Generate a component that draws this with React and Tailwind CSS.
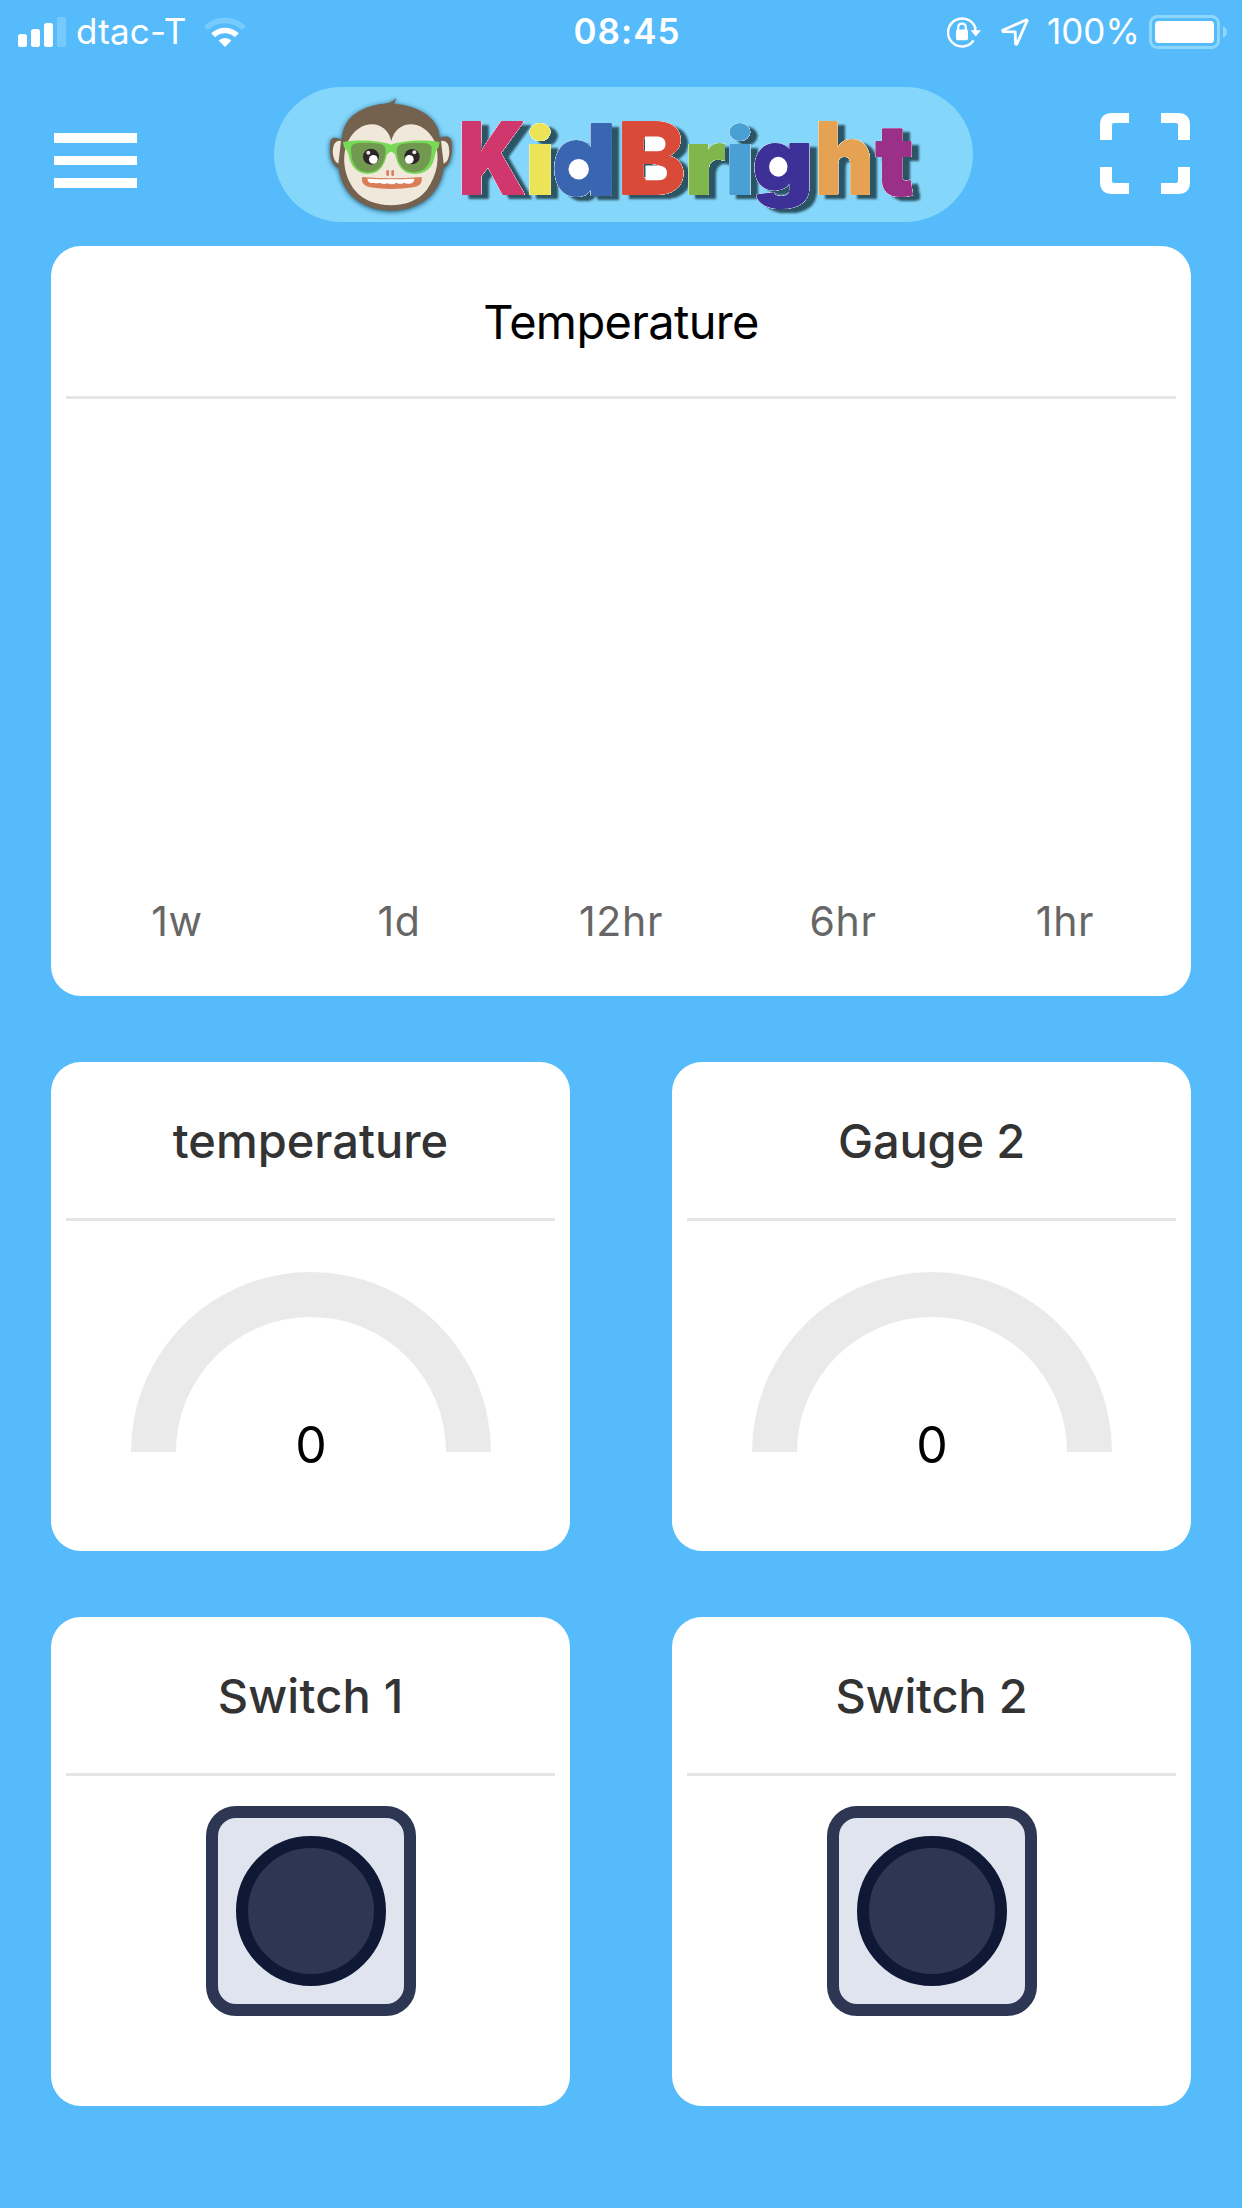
import React from "react";

const LETTERS = [
  { ch: "K", x: 458.8, y: 194, sx: 0.88, sy: 0.985, fill: "#d0376d" },
  { ch: "i", x: 525.8, y: 194, sx: 0.97, sy: 0.89, fill: "#ece357" },
  { ch: "d", x: 552.6, y: 194.6, sx: 0.98, sy: 0.975, fill: "#3a66b1" },
  { ch: "B", x: 618.4, y: 194, sx: 0.99, sy: 0.985, fill: "#d94a39" },
  { ch: "r", x: 685, y: 194, sx: 0.93, sy: 0.9, fill: "#80b64c" },
  { ch: "i", x: 725.4, y: 194, sx: 0.97, sy: 0.89, fill: "#4aa0d5" },
  { ch: "g", x: 752.8, y: 190, sx: 0.93, sy: 0.84, fill: "#3d3198" },
  { ch: "h", x: 815, y: 194, sx: 0.9, sy: 0.985, fill: "#e4a252" },
  { ch: "t", x: 875.6, y: 194.6, sx: 0.95, sy: 0.97, fill: "#9a3088" },
];

function Monkey() {
  return (
    <g transform="translate(270 80) scale(0.33333)">
      <g className="drop-shadow-[0_3px_8px_#16506e]">
        <path
          fill="#74614e"
          d="M216 180 C217 105 285 76 352 70 Q368 66 378 53 Q377 66 371 71 C440 76 508 110 509 174 Q540 162 545 184 C548 220 544 252 521 264 C512 340 450 392 364 392 C276 392 215 340 206 264 C182 254 177 220 181 184 Q186 164 216 180 Z"
        />
      </g>
      <path fill="#f1e8dc" d="M213 183 Q190 178 188 216 Q190 244 205 251 Z" />
      <path fill="#f1e8dc" d="M513 183 Q537 178 538 216 Q537 244 521 251 Z" />
      <path
        fill="#f1e8dc"
        d="M364 183 C350 120 270 112 234 184 C212 232 224 292 254 330 C300 390 424 392 470 330 C502 286 512 232 494 184 C458 112 378 120 364 183 Z"
      />
      <path
        fill="#77d956"
        d="M219 186 C280 176 335 184 363 194 C392 184 448 176 509 186 L506 201 Q498 210 495 226 C488 268 465 282 433 282 C400 282 384 262 376 226 Q364 204 350 226 C342 262 326 282 292 282 C258 280 242 258 236 226 Q232 210 222 202 Z"
      />
      <path fill="#719a50" d="M243 204 Q244 190 266 189 Q315 186 335 193 Q347 197 347 214 C344 256 325 277 293 277 C260 276 242 250 243 204 Z" />
      <path fill="#719a50" d="M485 204 Q484 190 462 189 Q413 186 393 193 Q380 197 380 214 C383 256 402 277 434 277 C467 276 486 250 485 204 Z" />
      <circle cx="303" cy="230" r="24" fill="#2d2528" />
      <circle cx="426" cy="230" r="23" fill="#2d2528" />
      <circle cx="310" cy="238" r="13" fill="#fff" />
      <circle cx="418" cy="238" r="13" fill="#fff" />
      <circle cx="295" cy="218" r="6" fill="#e8e4e4" />
      <circle cx="433" cy="217" r="6" fill="#e8e4e4" />
      <rect x="349" y="270" width="8" height="18" rx="4" fill="#d9805f" />
      <rect x="364" y="270" width="8" height="18" rx="4" fill="#d9805f" />
      <path fill="#d97e58" d="M276 291 Q364 298 455 291 Q460 318 430 322 Q364 332 300 322 Q272 316 276 291 Z" />
      <path fill="#fff" d="M292 296 Q364 300 433 296 Q433 310 418 311 Q408 312 402 308 Q392 315 379 308 Q368 317 352 310 Q340 315 330 308 Q320 312 312 308 Q294 312 292 296 Z" />
    </g>
  );
}

function Logo() {
  return (
    <div className="ml-[137px] h-[135px] w-[699px] overflow-hidden rounded-full bg-[#84d6fb]">
      <svg viewBox="274 87 699 135" className="block h-[135px] w-[699px]">
        <Monkey />
        <g className="drop-shadow-[7px_4px_1.3px_#2b5464]">
          {LETTERS.map((l, i) => (
            <g key={i} className="[filter:drop-shadow(0_0_0.7px_#fff)_drop-shadow(0_0_0.5px_#fff)_drop-shadow(0_0_0.4px_#fff)]">
              <text
                transform={`translate(${l.x} ${l.y}) scale(${l.sx} ${l.sy})`}
                fill={l.fill}
                stroke={l.fill}
                strokeWidth="2.2"
                strokeLinejoin="round"
                className="font-['Inter',sans-serif] text-[100px] font-black"
              >
                {l.ch}
              </text>
            </g>
          ))}
          <ellipse cx="580" cy="168.5" rx="13" ry="16" fill="#3a66b1" />
          <ellipse cx="779" cy="166" rx="13" ry="14" fill="#3d3198" />
          <g fill="#fff">
            <circle cx="578.7" cy="169.3" r="10.2" />
            <path d="M645 136.5H658Q665.5 137 665.5 144Q665.5 151 658 151.2H645Z" />
            <path d="M645.5 165.5H659Q667 166 667 173Q667 180 659 180.3H645.5Z" />
            <ellipse cx="778.3" cy="166.8" rx="9.2" ry="10" />
          </g>
        </g>
      </svg>
    </div>
  );
}

function StatusBar() {
  return (
    <div className="grid h-[63px] grid-cols-[1fr_auto_1fr] items-center text-[35px] leading-none text-white">
      <div className="flex items-center pl-[18px]">
        <svg viewBox="0 0 48 30" className="h-[30px] w-12 shrink-0">
          <rect x="0" y="17" width="9" height="13" rx="2.5" fill="#fff" />
          <rect x="13" y="12" width="9" height="18" rx="2.5" fill="#fff" />
          <rect x="26" y="6" width="9" height="24" rx="2.5" fill="#fff" />
          <rect x="39" y="0" width="9" height="30" rx="2.5" fill="#75cbfd" />
        </svg>
        <span className="ml-2.5 w-[109px] whitespace-nowrap tracking-[0.2px]">dtac-T</span>
        <svg viewBox="0 0 42 30" className="ml-[19px] h-[30px] w-[42px] shrink-0">
          <path d="M0 9A30 30 0 0 1 42 9L38 13.2A24.2 24.2 0 0 0 4 13.2Z" fill="#75cbfd" />
          <path d="M7.2 16.3A19.8 19.8 0 0 1 34.8 16.3L30.8 20.3A14 14 0 0 0 11.2 20.3Z" fill="#fff" />
          <path d="M14.6 23.6A9.4 9.4 0 0 1 27.4 23.6L21 30Z" fill="#fff" />
        </svg>
      </div>
      <span className="pl-3 font-semibold tracking-[1px]">08:45</span>
      <div className="flex items-center justify-end pr-[15px]">
        <svg viewBox="0 0 36 32" className="h-8 w-9 shrink-0" fill="none">
          <path d="M26.6 24.4A14 14 0 1 1 28.4 12.2" stroke="#fff" strokeWidth="2.5" />
          <path d="M28.2 11V16" stroke="#fff" strokeWidth="2.5" />
          <path d="M23.6 14.2H34L28.8 20.6Z" fill="#fff" />
          <rect x="9" y="13.6" width="12" height="10.6" rx="1.6" fill="#fff" />
          <path d="M11.2 14V11.4Q11.2 7.6 15 7.6Q18.8 7.6 18.8 11.4V14" stroke="#fff" strokeWidth="2.2" />
        </svg>
        <svg viewBox="0 0 28 28" className="ml-[18px] h-7 w-7 shrink-0" fill="none">
          <path d="M25.4 1.8L1.6 12.4L2 13.6L14.2 13.9L14.6 26L15.8 26.2L26.2 2.6Z" stroke="#fff" strokeWidth="2.8" strokeLinejoin="round" />
        </svg>
        <span className="ml-[18px] w-[92px] whitespace-nowrap">100%</span>
        <svg viewBox="0 0 78 34" className="ml-[10px] h-[34px] w-[78px] shrink-0">
          <rect x="1.5" y="1.5" width="68" height="31" rx="7" fill="none" stroke="#8dd6fd" strokeWidth="3" />
          <rect x="6" y="6" width="59" height="22" rx="3.5" fill="#fff" />
          <path d="M74 11Q78 13 78 17Q78 21 74 23Z" fill="#8dd6fd" />
        </svg>
      </div>
    </div>
  );
}

function Header() {
  return (
    <header className="flex h-[183px] items-start pl-[54px] pt-6">
      <button className="mt-[46px] flex h-[55px] w-[83px] flex-col justify-between" aria-label="Menu">
        <span className="h-2.5 w-full bg-white" />
        <span className="h-[9px] w-full bg-white" />
        <span className="h-2.5 w-full bg-white" />
      </button>
      <Logo />
      <button className="ml-[127px] mt-[26px]" aria-label="Full screen">
        <svg viewBox="0 0 90 81" className="block h-[81px] w-[90px]" fill="#fff">
          <path d="M0 27V12Q0 0 12 0H29V10H14Q12 10 12 12V27Z" />
          <path d="M90 27V12Q90 0 78 0H61V10H76Q78 10 78 12V27Z" />
          <path d="M0 54V69Q0 81 12 81H29V70H14Q12 70 12 68V54Z" />
          <path d="M90 54V69Q90 81 78 81H61V70H76Q78 70 78 68V54Z" />
        </svg>
      </button>
    </header>
  );
}

function SmallCard({ title, tracking, children }) {
  return (
    <section className="h-[489px] rounded-[30px] bg-white px-[15px]">
      <h2 className={`flex h-[159px] items-center justify-center border-b-[3px] border-[#e5e5e5] text-[47px] font-medium leading-none text-[#333] ${tracking}`}>
        {title}
      </h2>
      {children}
    </section>
  );
}

function Gauge({ value }) {
  return (
    <div className="flex flex-col items-center pt-[51px]">
      <svg viewBox="0 0 360 180" className="ml-px h-[180px] w-[360px]">
        <path d="M0 180A180 180 0 0 1 360 180H315A135 135 0 0 0 45 180Z" fill="#eaeaea" />
      </svg>
      <span className="-mt-8 pl-px text-[50px] leading-none text-black">{value}</span>
    </div>
  );
}

function SwitchButton() {
  return (
    <div className="flex justify-center pt-[30px]">
      <button className="ml-px flex size-[210px] items-center justify-center rounded-[30px] border-[12px] border-[#2d3652] bg-[#e0e4ef]">
        <span className="size-[150px] rounded-full border-[12px] border-[#0f1834] bg-[#2d3652]" />
      </button>
    </div>
  );
}

export default function App() {
  return (
    <main className="h-[2208px] w-[1242px] overflow-hidden bg-[#56bbfa] font-['Inter','Liberation_Sans',sans-serif]">
      <StatusBar />
      <Header />
      <div className="flex flex-col gap-[66px] px-[51px]">
        <section className="flex h-[750px] flex-col rounded-[30px] bg-white px-[15px]">
          <h1 className="flex h-[153px] shrink-0 items-center justify-center border-b-[3px] border-[#e5e5e5] text-[47px] leading-none tracking-[-0.66px] text-black">
            Temperature
          </h1>
          <div className="mt-auto grid grid-cols-5 pb-[54px] text-center text-[41px] leading-none tracking-[0.7px] text-[#666]">
            {["1w", "1d", "12hr", "6hr", "1hr"].map((r) => (
              <button key={r}>{r}</button>
            ))}
          </div>
        </section>
        <div className="grid grid-cols-2 gap-x-[102px] gap-y-[66px]">
          <SmallCard title="temperature" tracking="tracking-normal">
            <Gauge value={0} />
          </SmallCard>
          <SmallCard title="Gauge 2" tracking="tracking-[-0.2px]">
            <Gauge value={0} />
          </SmallCard>
          <SmallCard title="Switch 1" tracking="tracking-[0.2px]">
            <SwitchButton />
          </SmallCard>
          <SmallCard title="Switch 2" tracking="tracking-[-0.2px]">
            <SwitchButton />
          </SmallCard>
        </div>
      </div>
    </main>
  );
}
